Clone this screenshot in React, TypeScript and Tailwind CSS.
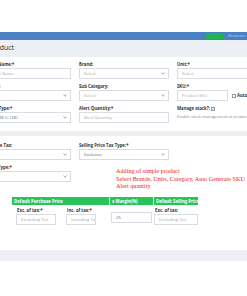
import React from 'react'

const font = { fontFamily: '"Open Sans", "Liberation Sans", sans-serif' }

function Label({ children }: { children: React.ReactNode }) {
  return (
    <div className="h-[7px] text-[4.3px] leading-[6px] font-bold text-[#333] whitespace-nowrap">
      {children}
    </div>
  )
}

function Field({
  text,
  select,
  dark,
  className = '',
}: {
  text: string
  select?: boolean
  dark?: boolean
  className?: string
}) {
  return (
    <div
      className={`h-[11px] border border-[#d8dce3] bg-white flex items-center justify-between pl-[4px] pr-[3px] overflow-hidden ${className}`}
    >
      <span className={`text-[4.3px] whitespace-nowrap ${dark ? 'text-[#666]' : 'text-[#aaa]'}`}>{text}</span>
      {select && (
        <svg width="4" height="3" viewBox="0 0 4 3" className="shrink-0">
          <path d="M0.5 0.5 L2 2.3 L3.5 0.5" fill="none" stroke="#888" strokeWidth="0.7" />
        </svg>
      )}
    </div>
  )
}

function Check({ checked }: { checked?: boolean }) {
  return (
    <span className="inline-flex w-[4px] h-[4px] border border-[#999] bg-white items-center justify-center align-middle">
      {checked && (
        <svg width="4" height="4" viewBox="0 0 4 4">
          <path d="M0.6 2 L1.6 3 L3.4 0.8" fill="none" stroke="#333" strokeWidth="0.7" />
        </svg>
      )}
    </span>
  )
}

export default function App(): React.ReactElement {
  return (
    <div className="w-[247px] h-[296px] overflow-hidden bg-white relative" style={font}>
      {/* top space */}
      <div className="h-[32px] bg-white" />

      {/* nav bar */}
      <div className="h-[8px] bg-[#4a80c4] flex items-center pl-[205px] gap-[5px] overflow-hidden">
        <div className="w-[18px] h-[6px] bg-[#1fb357] shrink-0" />
        <span className="text-[4px] text-[#c9dbf0] whitespace-nowrap">Generate</span>
      </div>

      {/* page header */}
      <div className="h-[17px] bg-[#ecf0f5] flex items-center overflow-hidden">
        <span className="-ml-[42px] text-[7px] text-[#333] whitespace-nowrap">Add new product</span>
      </div>

      {/* box 1 */}
      <div className="h-[74px] bg-white overflow-hidden pt-[4px]">
        <div className="-ml-[20px] grid grid-cols-[91px_90px_90px] gap-x-[8px] gap-y-[4px]">
          <div>
            <Label>Product Name:*</Label>
            <Field text="Product Name" />
          </div>
          <div>
            <Label>Brand:</Label>
            <Field text="Select" select />
          </div>
          <div>
            <Label>Unit:*</Label>
            <Field text="Select" select />
          </div>

          <div>
            <Label>Category:</Label>
            <Field text="Select" select />
          </div>
          <div>
            <Label>Sub Category:</Label>
            <Field text="Select" select />
          </div>
          <div>
            <Label>SKU:*</Label>
            <div className="flex items-center gap-[4px]">
              <Field text="Product SKU" className="w-[51px]" />
              <span className="flex items-center gap-[1px] text-[4.3px] text-[#333] font-bold">
                <Check />
                Auto
              </span>
            </div>
          </div>

          <div>
            <Label>Barcode Type:*</Label>
            <Field text="Code 128 (C128)" select dark />
          </div>
          <div>
            <Label>Alert Quantity:*</Label>
            <Field text="Alert Quantity" />
          </div>
          <div>
            <div className="h-[7px] flex items-center gap-[1px] text-[4.3px] font-bold text-[#333] whitespace-nowrap">
              Manage stock?: <Check checked />
            </div>
            <div className="h-[11px] flex items-center text-[4.1px] text-[#888] whitespace-nowrap">
              Enable stock management at product level
            </div>
          </div>
        </div>
      </div>

      {/* gap band */}
      <div className="h-[5px] bg-[#ecf0f5]" />

      {/* box 2 */}
      <div className="h-[114px] bg-white overflow-hidden pt-[6px] relative">
        <div className="-ml-[20px] grid grid-cols-[91px_90px_90px] gap-x-[8px] gap-y-[4px]">
          <div>
            <Label>Applicable Tax:</Label>
            <Field text="" select />
          </div>
          <div>
            <Label>Selling Price Tax Type:*</Label>
            <Field text="Exclusive" select dark />
          </div>
          <div />
          <div>
            <Label>Product Type:*</Label>
            <Field text="" select />
          </div>
        </div>

        {/* price table */}
        <div className="ml-[12px] mt-[15px] w-[186px]">
          <div className="h-[8px] flex bg-[#2cc25a] text-white text-[4.3px] font-bold whitespace-nowrap">
            <div className="w-[98px] flex items-center pl-[2px] border-r border-[#e6f7ea] overflow-hidden">
              Default Purchase Price
            </div>
            <div className="w-[44px] flex items-center pl-[2px] border-r border-[#e6f7ea] overflow-hidden">
              x Margin(%)
            </div>
            <div className="flex-1 flex items-center pl-[2px] overflow-hidden">Default Selling Price</div>
          </div>
          <div className="flex pt-[2px]">
            <div className="w-[98px] flex gap-[10px] pl-[4px]">
              <div className="w-[40px]">
                <Label>&nbsp;Exc. of tax:*</Label>
                <Field text="Excluding Tax" />
              </div>
              <div className="w-[30px]">
                <Label>&nbsp;Inc. of tax:*</Label>
                <Field text="Including Tax" />
              </div>
            </div>
            <div className="w-[44px] pl-[1px] pt-[5px]">
              <Field text="25" dark className="w-[41px]" />
            </div>
            <div className="flex-1">
              <Label>&nbsp;Exc. of tax:</Label>
              <Field text="Excluding Tax" />
            </div>
          </div>
        </div>

        {/* annotation */}
        <div
          className="absolute left-[116px] top-[31px] text-[6.2px] leading-[7.5px] text-[#e8231f] whitespace-nowrap"
          style={{ fontFamily: '"Liberation Serif", "DejaVu Serif", serif' }}
        >
          <div>Adding of simple product</div>
          <div>Select Brands, Units, Category, Auto Generate SKU</div>
          <div>Alert quantity</div>
        </div>
      </div>

      {/* bottom band */}
      <div className="h-[11px] bg-[#ecf0f5]" />
      <div className="bg-white" />
    </div>
  )
}
